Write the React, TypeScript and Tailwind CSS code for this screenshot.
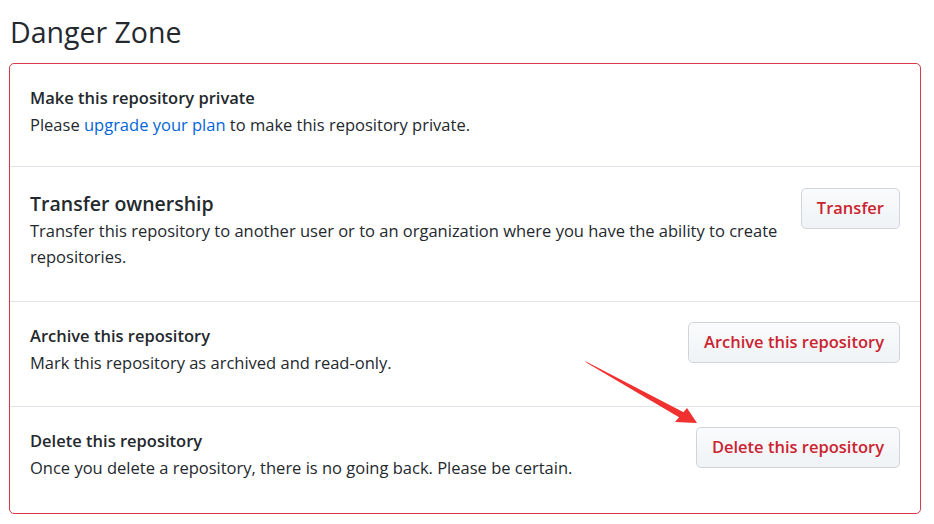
import React from 'react';

const font = { fontFamily: '"Segoe UI", "Open Sans", "Noto Sans", sans-serif' };

function DangerButton({ children }: { children: React.ReactNode }) {
  return (
    <button className="h-[41px] rounded-[5px] border border-[#d1d5da] bg-gradient-to-b from-[#fafbfc] to-[#eff3f6] px-[15px] text-[16.5px] font-semibold text-[#cb2431] whitespace-nowrap">
      {children}
    </button>
  );
}

export default function App() {
  return (
    <div className="relative min-h-[524px] bg-white pl-[9px] pr-[13px] text-[#24292e]" style={font}>
      {/* Heading */}
      <h2 className="pt-[13px] pl-[1px] text-[28.5px] leading-[38px] font-normal">Danger Zone</h2>

      {/* Danger box */}
      <div className="mt-[12px] w-[912px] rounded-[5px] border border-[#d73a49]">
        {/* Private */}
        <div className="px-5 pt-5 pb-[28px]">
          <p className="text-[16.5px] leading-[28px] font-semibold">Make this repository private</p>
          <p className="text-[16.5px] leading-[26px]">
            Please <span className="text-[#0366d6]">upgrade your plan</span> to make this repository private.
          </p>
        </div>

        {/* Transfer */}
        <div className="flex items-start justify-between border-t border-[#e1e4e8] px-5 pt-[21px] pb-[31px]">
          <div className="pt-[2px]">
            <p className="text-[19.5px] leading-[28px] font-semibold">Transfer ownership</p>
            <p className="text-[16.5px] leading-[26px]">
              Transfer this repository to another user or to an organization where you have the ability to create
              <br />
              repositories.
            </p>
          </div>
          <DangerButton>Transfer</DangerButton>
        </div>

        {/* Archive */}
        <div className="flex items-start justify-between border-t border-[#e1e4e8] px-5 pt-5 pb-[30px]">
          <div>
            <p className="text-[16.5px] leading-[28px] font-semibold">Archive this repository</p>
            <p className="text-[16.5px] leading-[26px]">Mark this repository as archived and read-only.</p>
          </div>
          <DangerButton>Archive this repository</DangerButton>
        </div>

        {/* Delete */}
        <div className="flex items-start justify-between border-t border-[#e1e4e8] px-5 pt-5 pb-[32px]">
          <div>
            <p className="text-[16.5px] leading-[28px] font-semibold">Delete this repository</p>
            <p className="text-[16.5px] leading-[26px]">
              Once you delete a repository, there is no going back. Please be certain.
            </p>
          </div>
          <DangerButton>Delete this repository</DangerButton>
        </div>
      </div>

      {/* Annotation arrow */}
      <svg className="absolute left-0 top-0 pointer-events-none" width="934" height="524">
        <polygon points="585,361 587,363 682,419 685,413" fill="#f0312f" />
        <polygon points="697,423 675,422 687,408" fill="#f0312f" />
      </svg>
    </div>
  );
}
